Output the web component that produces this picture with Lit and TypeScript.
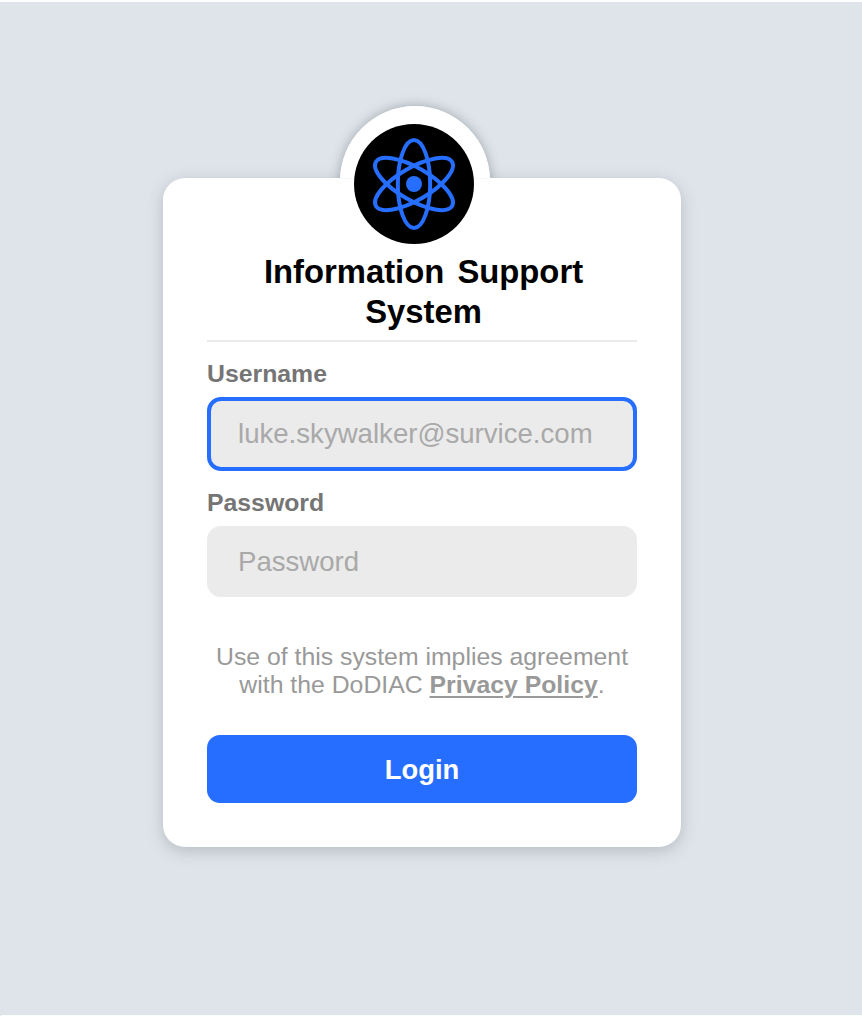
import { LitElement, html, css } from "lit";
import { customElement } from "lit/decorators.js";

@customElement("app-root")
class AppRoot extends LitElement {
  static styles = css`
    :host {
      display: block;
      box-sizing: border-box;
      height: 1016px;
      padding: 178px 0 0 163px;
      overflow: hidden;
      background: #dfe4eb;
      font-family: "Liberation Sans", Arial, sans-serif;
      box-shadow: inset 0 2px #fcfdfd, inset 1px 0 #e1e5e8, inset 0 -1px #fafbfb;
    }
    * { box-sizing: border-box; }
    .card {
      position: relative;
      width: 518px;
      height: 669px;
      padding: 74px 44px 0;
      border-radius: 22px;
      background: #fff;
      box-shadow: 0 4px 16px rgba(65, 80, 75, 0.26);
    }
    .halo {
      position: absolute;
      left: 157px;
      top: -92px;
      width: 190px;
      height: 93px;
      overflow: hidden;
    }
    .halo::before {
      content: "";
      display: block;
      width: 150px;
      height: 150px;
      margin: 20px;
      border-radius: 50%;
      background: linear-gradient(#fff 72px, #f6f8f8 72px, #f6f8f8 73px, #fff 73px);
      box-shadow: 0 0 12px rgba(65, 80, 80, 0.42);
      clip-path: polygon(-20px -20px, 170px -20px, 170px 72px, 150px 72px, 150px 73px, 0 73px, 0 72px, -20px 72px);
    }
    .logo {
      position: absolute;
      left: 191px;
      top: -54px;
      width: 120px;
      height: 120px;
    }
    h1 {
      margin: 0;
      height: 90px;
      padding-left: 3px;
      border-bottom: 2px solid #ebebeb;
      font-size: 32.8px;
      line-height: 40px;
      word-spacing: 4px;
      text-align: center;
      color: #000;
    }
    .field { display: flex; flex-direction: column; }
    label {
      height: 55px;
      padding-top: 17px;
      font-size: 24.8px;
      line-height: 30px;
      font-weight: 700;
      color: #757575;
    }
    input {
      width: 430px;
      height: 73.5px;
      margin: 0;
      padding: 0 27px;
      border: 4px solid #266eff;
      border-radius: 14px;
      background: #ebebeb;
      outline: none;
      font: 27.6px "Liberation Sans", Arial, sans-serif;
      color: #a9a9a9;
    }
    input::placeholder { color: #a9a9a9; opacity: 1; }
    .plain { height: 71.5px; padding-top: 2px; border-color: #ebebeb; }
    p {
      margin: 46px 0 37px;
      font-size: 24.8px;
      line-height: 27.5px;
      text-align: center;
      color: #999;
    }
    a {
      font-weight: 700;
      color: #999;
      text-decoration: underline;
      text-decoration-thickness: 2px;
      text-underline-offset: 3px;
    }
    button {
      display: block;
      width: 430px;
      height: 68px;
      padding: 2px 0 0;
      border: 0;
      border-radius: 13px;
      background: #266eff;
      color: #fff;
      font: 700 27.4px "Liberation Sans", Arial, sans-serif;
    }
  `;

  render() {
    return html`
      <main class="card">
        <div class="halo"></div>
        <svg class="logo" viewBox="0 0 120 120" aria-hidden="true">
          <circle cx="60" cy="60" r="60" />
          <g fill="none" stroke="#266eff" stroke-width="4">
            <ellipse cx="60" cy="60" rx="16.2" ry="44" />
            <ellipse cx="60" cy="60" rx="16.2" ry="44" transform="rotate(60 60 60)" />
            <ellipse cx="60" cy="60" rx="16.2" ry="44" transform="rotate(-60 60 60)" />
          </g>
          <circle cx="60" cy="60" r="8" fill="#266eff" />
        </svg>
        <h1>Information Support System</h1>
        <div class="field">
          <label for="user">Username</label>
          <input id="user" type="text" placeholder="luke.skywalker@survice.com" />
        </div>
        <div class="field">
          <label for="pass">Password</label>
          <input id="pass" class="plain" type="password" placeholder="Password" />
        </div>
        <p>Use of this system implies agreement with the DoDIAC <a>Privacy Policy</a>.</p>
        <button type="button">Login</button>
      </main>
    `;
  }
}
